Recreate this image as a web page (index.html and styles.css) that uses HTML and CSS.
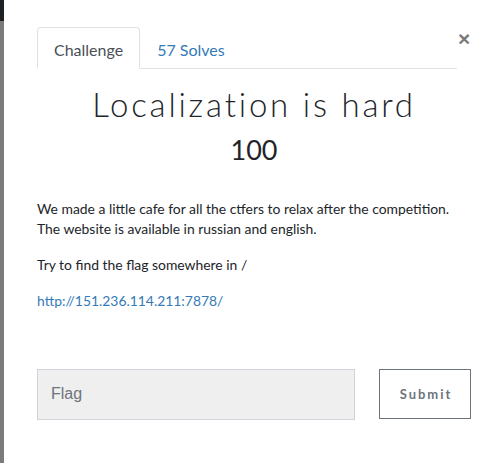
FILE: index.html
```html
<!DOCTYPE html>
<html>
<head>
<meta charset="utf-8">
<link rel="stylesheet" href="styles.css">
</head>
<body>
<div class="page">
  <div class="strip"><div class="strip-top"></div></div>
  <div class="modal">
    <div class="header">
      <ul class="tabs">
        <li class="tab active">Challenge</li>
        <li class="tab link">57 Solves</li>
      </ul>
      <span class="close">&times;</span>
    </div>
    <h2 class="title">Localization is hard</h2>
    <h3 class="value">100</h3>
    <div class="desc">
      <p>We made a little cafe for all the ctfers to relax after the competition.<br>The website is available in russian and english.</p>
      <p>Try to find the flag somewhere in /</p>
      <p><a href="#">http://151.236.114.211:7878/</a></p>
    </div>
    <form class="submit-row">
      <input class="flag" type="text" placeholder="Flag">
      <button class="btn" type="button">Submit</button>
    </form>
  </div>
</div>
</body>
</html>
```

FILE: styles.css
```css
html, body {
  margin: 0;
  padding: 0;
  background: #ffffff;
  font-family: "Lato", "Liberation Sans", sans-serif;
  color: #212529;
}
.page {
  display: flex;
  width: 499px;
  height: 463px;
  overflow: hidden;
}
.strip {
  width: 4px;
  flex: none;
  background: #7b7b7b;
}
.strip-top {
  height: 21px;
  background: #1e2124;
}
.modal {
  flex: 1;
  padding: 27px 28px 0 33px;
}
.header {
  display: flex;
  align-items: flex-start;
}
.tabs {
  list-style: none;
  margin: 0;
  padding: 0;
  display: flex;
  width: 420px;
  height: 41px;
  border-bottom: 1px solid #dee2e6;
}
.tab {
  padding: 0 16px;
  height: 41px;
  line-height: 43px;
  font-size: 16px;
  border: 1px solid transparent;
  border-radius: 4px 4px 0 0;
  box-sizing: border-box;
}
.tab.active {
  color: #495057;
  border-color: #dee2e6 #dee2e6 #ffffff;
  height: 42px;
  background: #fff;
}
.tab.link {
  color: #337ab7;
}
.close {
  margin-left: 1px;
  margin-top: 2px;
  font-size: 21px;
  line-height: 20px;
  color: #7a7a7a;
  font-family: "Liberation Sans", sans-serif;
  font-weight: bold;
}
.title {
  margin: 16px 0 0;
  text-align: center;
  font-weight: 300;
  font-size: 33px;
  line-height: 1.2;
  letter-spacing: 2.8px;
  color: #212529;
}
.value {
  margin: 9px 0 0;
  text-align: center;
  font-weight: 400;
  font-size: 27px;
  line-height: 1.2;
  color: #212529;
}
.desc {
  margin-top: 33px;
  font-size: 13.9px;
  line-height: 20px;
  color: #212529;
}
.desc p {
  margin: 0 0 16px;
}
.desc a {
  color: #337ab7;
  text-decoration: none;
}
.submit-row {
  margin-top: 58px;
  display: flex;
  gap: 24px;
}
.flag {
  width: 318px;
  height: 51px;
  box-sizing: border-box;
  border: 1px solid #ced4da;
  background: #efefef;
  padding: 0 13px;
  font-family: "Liberation Sans", sans-serif;
  font-size: 16px;
  color: #495057;
  outline: none;
  margin: 0;
}
.flag::placeholder {
  color: #6c757d;
}
.btn {
  width: 92px;
  height: 50px;
  box-sizing: border-box;
  border: 1px solid #6c757d;
  background: #fff;
  color: #6c757d;
  font-family: "Lato", sans-serif;
  font-weight: bold;
  font-size: 13px;
  letter-spacing: 2px;
  padding: 0 0 0 2px;
  margin: 0;
}
```
